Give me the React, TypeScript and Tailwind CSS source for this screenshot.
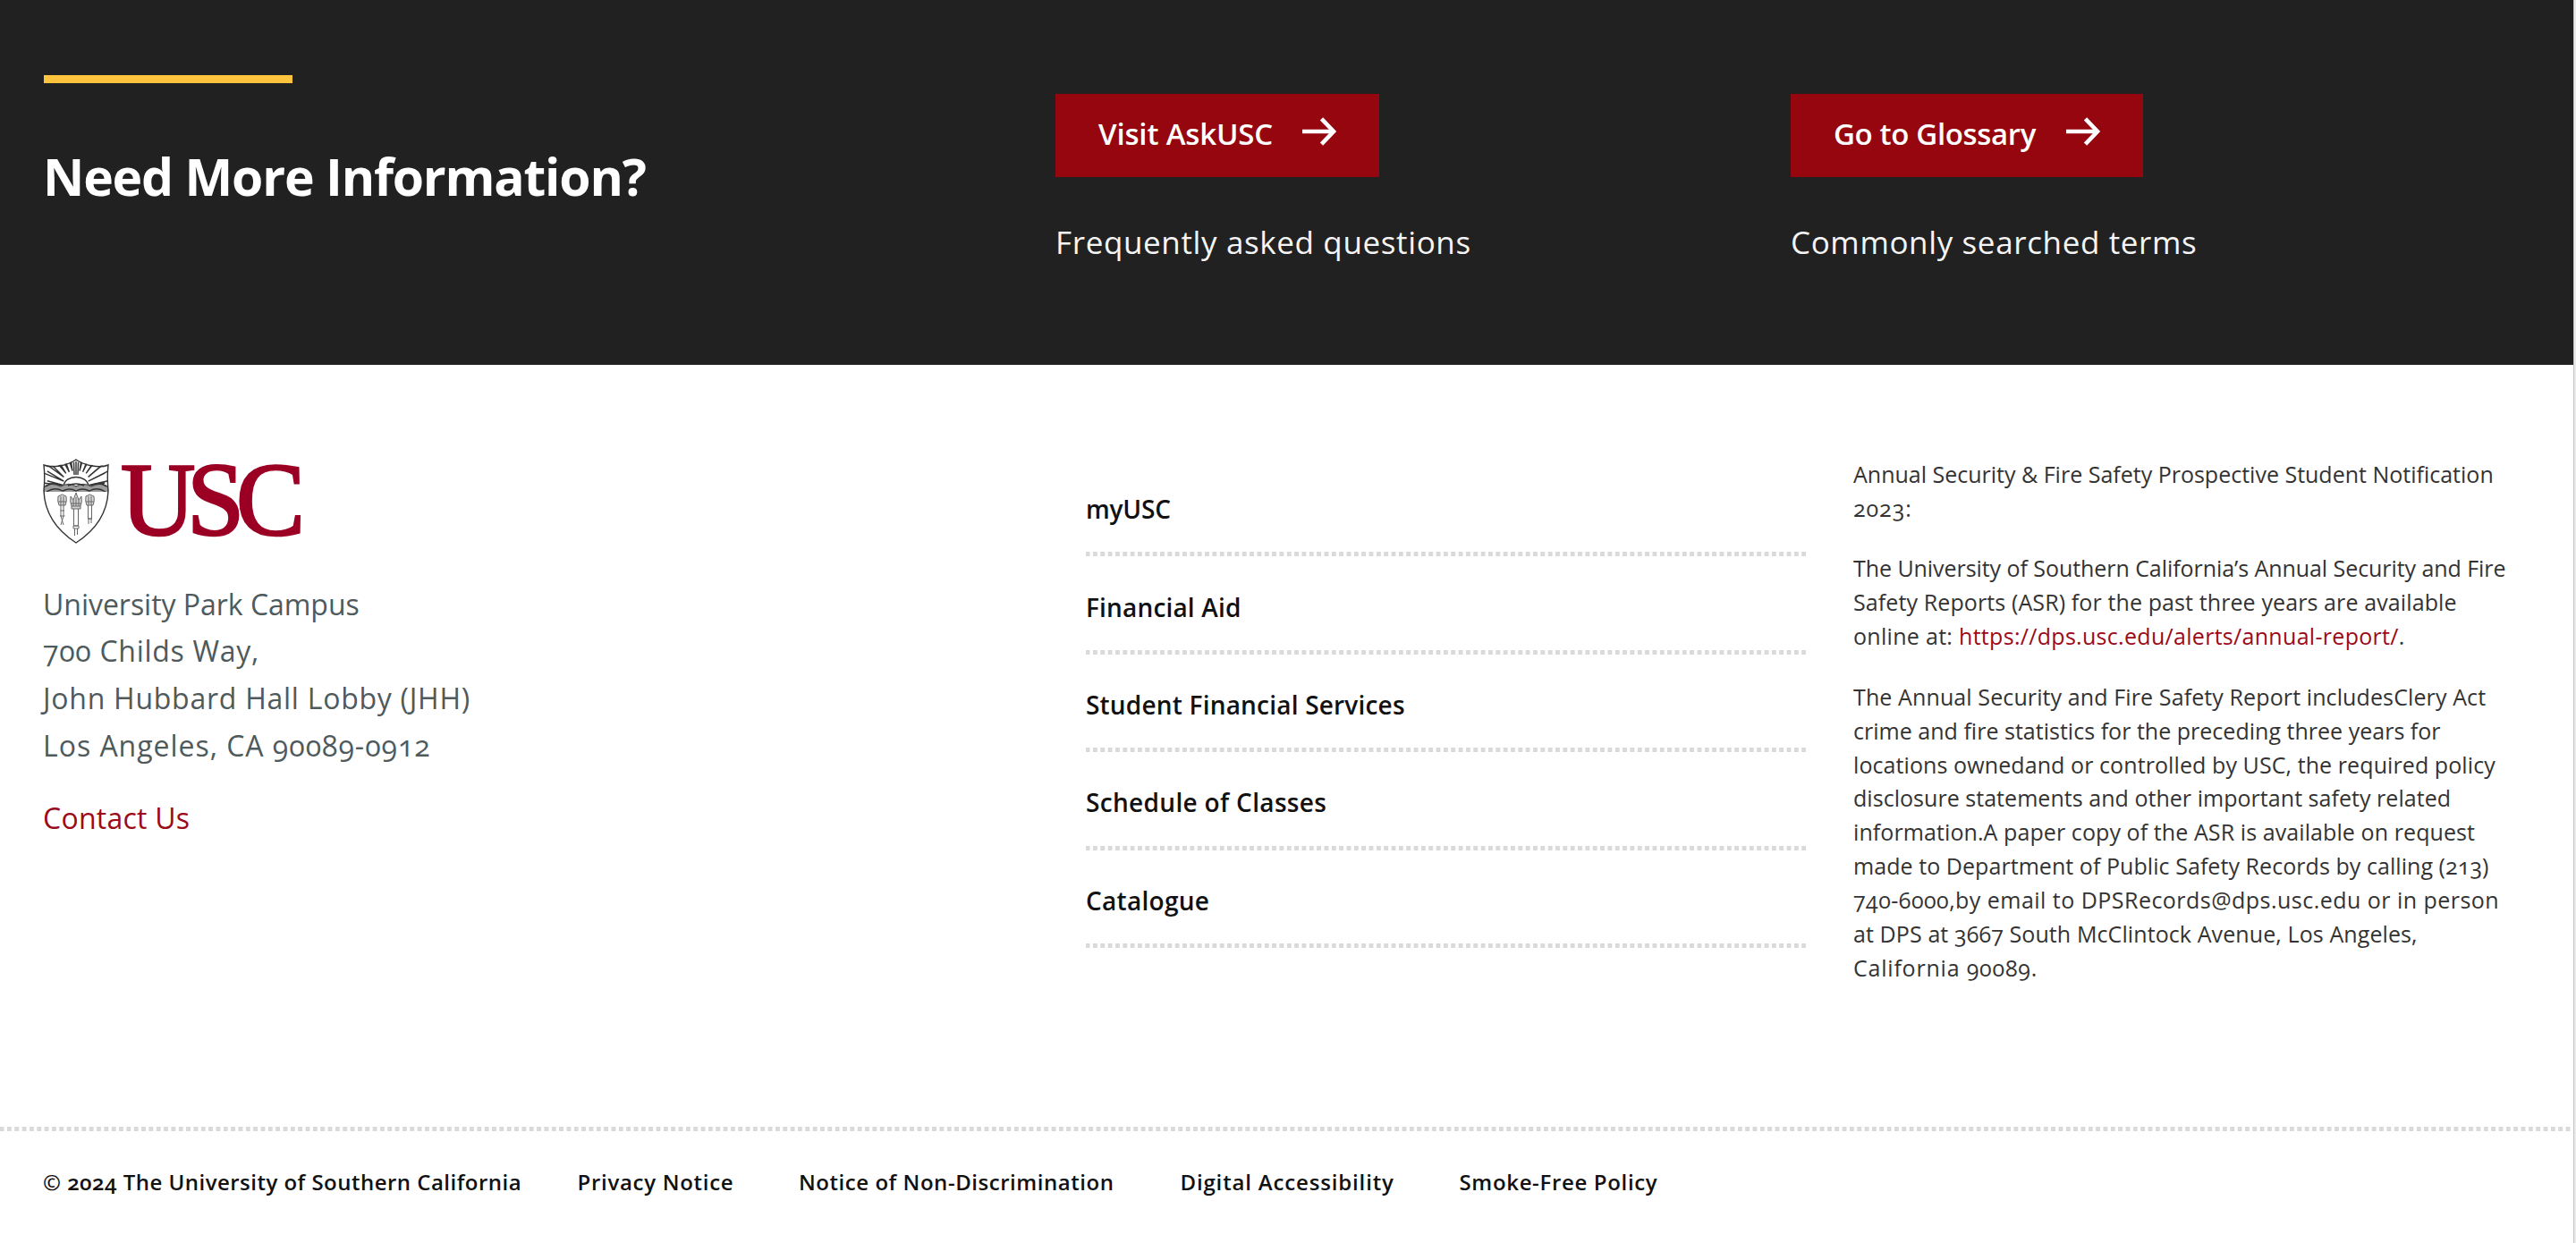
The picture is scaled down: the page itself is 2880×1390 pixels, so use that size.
const DOTS =
  "h-[5px] bg-[repeating-linear-gradient(90deg,#dadada_0_4px,#fff_5px_7.6px,#dadada_8.34px)]";

function Arrow() {
  return (
    <svg
      className="mb-1.5 h-8 w-10 shrink-0"
      viewBox="0 0 40 32"
      fill="none"
      stroke="#fff"
      strokeWidth="4.6"
    >
      <path d="M1 16h35" />
      <path d="M22.5 1.8 36 16 22.5 30.2" />
    </svg>
  );
}

const RAYS = [
  [-34, -6],
  [-34, -17],
  [-34, -29],
  [-28, -39],
  [-19, -43],
  [-10, -46],
  [10, -46],
  [19, -43],
  [28, -39],
  [34, -29],
  [34, -17],
  [34, -6],
];

function Shield() {
  return (
    <svg className="h-[95px] w-[74px] shrink-0" viewBox="0 0 74 95" fill="none" stroke="#333">
      <defs>
        <clipPath id="shield-top">
          <path d="M1 7Q19 10 37 1 54 10 73 7V37H1Z" />
        </clipPath>
      </defs>
      <g clipPath="url(#shield-top)" strokeWidth="1.4">
        {RAYS.map(([dx, dy], i) => (
          <path
            key={i}
            d={`M${37 + dx * 0.4} ${32 + dy * 0.4}L${37 + dx - 1.8} ${32 + dy + 1.2}M${37 + dx * 0.4} ${32 + dy * 0.4}L${37 + dx + 1.8} ${32 + dy - 1.2}`}
          />
        ))}
        <path d="M35 18 34.5 4M39 18 39.5 4M37 18V3" />
        <path d="M23 31C24 17 50 17 51 31Z" fill="#fff" />
        <path d="M1 32Q9 25 20 31 29 26 37 31 45 26 54 31 65 25 73 32V38H1Z" fill="#9c9c9c" stroke="#555" />
        <path d="M3 31Q11 25 20 30M54 30Q63 25 71 31M28 30Q37 26 46 30M4 37Q13 31 22 36 30 32 37 36 44 32 52 36 61 31 70 37" />
      </g>
      <path
        d="M1 7Q8 10 19 8 30 6 37 1 44 6 55 8 66 10 73 7C72 16 72 25 73 36 72 62 57 81 37 94 17 81 2 62 1 36 2 25 2 16 1 7Z"
        strokeWidth="1.4"
      />
      <g strokeWidth="1" stroke="#666">
        <path d="M31 42Q30 49 32 53H42Q44 49 43 42L40 46 37 38 34 46ZM32 53V56H42V53M31 50H43M34 46V53M37 43V53M40 46V53" fill="#d2d2d2" />
        <path d="M34.5 56V75H39.5V56M34 75H40V78H34ZM35.5 78V86M38.5 78V85" />
        <path d="M17 42Q16 48 18 52H25Q27 48 26 42L21.5 40ZM17 48H26M20 42V52M23 42V52" fill="#dadada" />
        <path d="M20 52V64M23 52V64M19.5 58H24M19 64H24.5M20 64 23 74M23 64 20 74" />
        <path d="M48 42Q47 48 49 52H56Q58 48 57 42L52.5 40ZM48 48H57M51 42V52M54 42V52" fill="#dadada" />
        <path d="M50.5 52V67H54.5V52M50 67H55M51 67V73M54 67V72" />
      </g>
    </svg>
  );
}

function Logo() {
  return (
    <div className="flex h-[95px] items-start">
      <Shield />
      <svg
        className="ml-[13px] h-[95px] w-[206px] overflow-visible"
        viewBox="0 0 206 95"
        fill="#9b0024"
        stroke="#9b0024"
        strokeWidth="2.6"
        fontFamily="'Liberation Serif', serif"
        fontSize="115.5"
      >
        <text x="0" y="84.5" textLength="206" lengthAdjust="spacing">
          USC
        </text>
      </svg>
    </div>
  );
}

type CtaProps = { label: string; note: string; width: string; tracking: string };

function Cta({ label, note, width, tracking }: CtaProps) {
  return (
    <div className="flex flex-col items-start">
      <a
        className={`flex h-[92.5px] items-center justify-between bg-[#95060e] pr-[47px] pb-[2px] pl-12 ${width}`}
      >
        <span className={`text-[33px] leading-10 font-semibold ${tracking}`}>{label}</span>
        <Arrow />
      </a>
      <p className="mt-12 text-[35px] leading-[50px] tracking-[0.63px] text-[#f5f5f5]">{note}</p>
    </div>
  );
}

const LINKS = [
  { text: "myUSC", tracking: "tracking-[-0.17px]" },
  { text: "Financial Aid", tracking: "tracking-[0.17px]" },
  { text: "Student Financial Services", tracking: "tracking-[0.2px]" },
  { text: "Schedule of Classes", tracking: "tracking-[0.33px]" },
  { text: "Catalogue", tracking: "tracking-[0.29px]" },
];

const REPORT = [
  { text: "The Annual Security and Fire Safety Report includesClery Act", tracking: "tracking-[0.11px]" },
  { text: "crime and fire statistics for the preceding three years for", tracking: "tracking-[0.02px]" },
  { text: "locations ownedand or controlled by USC, the required policy", tracking: "tracking-[0.09px]" },
  { text: "disclosure statements and other important safety related", tracking: "tracking-[0.04px]" },
  { text: "information.A paper copy of the ASR is available on request", tracking: "tracking-[0.09px]" },
  { text: "made to Department of Public Safety Records by calling (213)", tracking: "tracking-[0.06px]" },
  { text: "740-6000,by email to DPSRecords@dps.usc.edu or in person", tracking: "tracking-[0.47px]" },
  { text: "at DPS at 3667 South McClintock Avenue, Los Angeles,", tracking: "tracking-[0.1px]" },
  { text: "California 90089.", tracking: "tracking-[0.79px]" },
];

export default function App() {
  return (
    <div className="flex h-[1390px] w-[2880px] overflow-hidden bg-white font-['Open_Sans',sans-serif] whitespace-nowrap oldstyle-nums">
      <div className="flex w-[2877px] flex-col">
        <section className="flex h-[408px] shrink-0 bg-[#212121] pl-12 text-white">
          <div className="w-[1132px] pt-[84px]">
            <div className="ml-px h-[9px] w-[278px] bg-[#ffc43d]" />
            <h2 className="mt-[69px] text-[57px] leading-[70px] font-bold tracking-[-1.2px]">
              Need More Information?
            </h2>
          </div>
          <div className="w-[822px] pt-[105px]">
            <Cta
              label="Visit AskUSC"
              note="Frequently asked questions"
              width="w-[362px]"
              tracking="tracking-[-0.16px]"
            />
          </div>
          <div className="pt-[105px]">
            <Cta
              label="Go to Glossary"
              note="Commonly searched terms"
              width="w-[394px]"
              tracking="tracking-[-0.35px]"
            />
          </div>
        </section>

        <section className="flex h-[851.5px] shrink-0 pt-[105px] pl-12">
          <div className="w-[1166px]">
            <Logo />
            <address className="mt-[41.5px] text-[32px] leading-[52.7px] text-[#4f5a5c] not-italic">
              <p className="tracking-[-0.03px]">University Park Campus</p>
              <p className="tracking-[0.71px]">700 Childs Way,</p>
              <p className="tracking-[0.74px]">John Hubbard Hall Lobby (JHH)</p>
              <p className="tracking-[0.97px]">Los Angeles, CA 90089-0912</p>
            </address>
            <p className="mt-[28.7px] text-[32px] leading-[52.7px] tracking-[0.25px] text-[#9b0a18]">
              Contact Us
            </p>
          </div>

          <ul className="w-[805px]">
            {LINKS.map((l) => (
              <li key={l.text} className="flex h-[109.4px] flex-col justify-between pt-[38.2px]">
                <a className={`text-[28px] leading-9 font-semibold text-[#111] ${l.tracking}`}>{l.text}</a>
                <div className={DOTS} />
              </li>
            ))}
          </ul>

          <div className="-mt-px ml-[53px] text-[25px] leading-[37.9px] text-[#333]">
            <p>Annual Security &amp; Fire Safety Prospective Student Notification</p>
            <p className="tracking-[0.92px]">2023:</p>
            <p className="mt-[29.6px] tracking-[-0.06px]">
              The University of Southern California’s Annual Security and Fire
            </p>
            <p className="tracking-[0.11px]">Safety Reports (ASR) for the past three years are available</p>
            <p className="tracking-[0.3px]">
              online at: <a className="text-[#9b0a18]">https://dps.usc.edu/alerts/annual-report/</a>.
            </p>
            <div className="mt-[29.6px]">
              {REPORT.map((r) => (
                <p key={r.text} className={r.tracking}>
                  {r.text}
                </p>
              ))}
            </div>
          </div>
        </section>

        <footer className="flex flex-1 flex-col">
          <div className={DOTS} />
          <div className="mt-[39px] flex pl-12 text-[24px] leading-9 font-semibold text-[#111]">
            <span className="w-[597.5px] tracking-[0.48px]">© 2024 The University of Southern California</span>
            <a className="w-[247.5px] tracking-[0.71px]">Privacy Notice</a>
            <a className="w-[426.5px] tracking-[0.54px]">Notice of Non-Discrimination</a>
            <a className="w-[312px] tracking-[0.84px]">Digital Accessibility</a>
            <a className="tracking-[0.66px]">Smoke-Free Policy</a>
          </div>
        </footer>
      </div>
      <div className="w-[3px] border-l border-[#c4c4c4] bg-[#ebebeb]" />
    </div>
  );
}
